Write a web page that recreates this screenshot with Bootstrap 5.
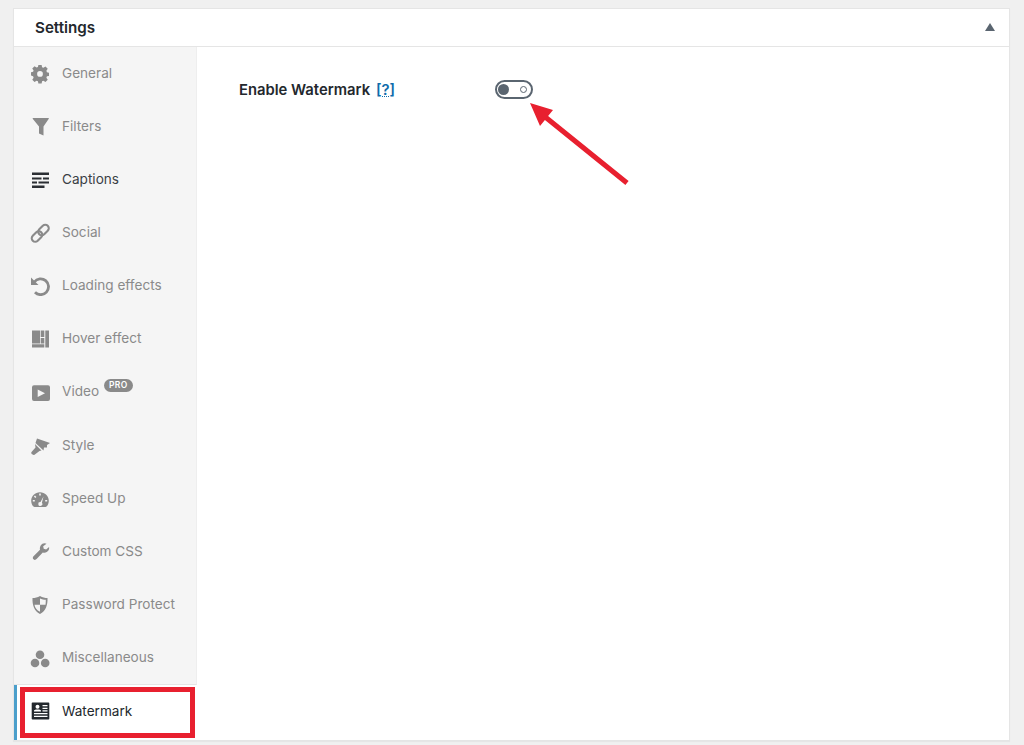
<!doctype html>
<html lang="en">
<head>
<meta charset="utf-8">
<title>Settings</title>
<link href="https://cdn.jsdelivr.net/npm/bootstrap@5.3.0/dist/css/bootstrap.min.css" rel="stylesheet">
<style>
html,body{height:745px;overflow:hidden}
body{background:#f0f0f0;font-family:Inter,"Liberation Sans",sans-serif;color:#23282d;padding:8px 14px 4px 13px}
.panel-box{height:733px;border:1px solid #e5e5e5;border-radius:0;background:#fff;box-shadow:0 1px 1px rgba(0,0,0,.04)}
.panel-head{height:38px;background:#fff;border-bottom:1px solid #e5e5e5;padding:2px 14px 0 21px;font-size:15.2px;font-weight:600;color:#23282d}
.caret-up{width:0;height:0;border-left:5px solid transparent;border-right:5px solid transparent;border-bottom:8px solid #5a6570;margin-top:-3px}
.side-col{width:183px;flex:none}
.side-list{background:#f5f5f5;border-right:1px solid #eee;border-bottom:1px solid #e5e5e5}
.side-link{height:53px;padding-left:16px;gap:12px;color:#8a8a8a;font-size:13.6px;text-decoration:none;position:relative}
.side-link:nth-child(8){margin-top:1px}
.side-link svg{flex:none;fill:#8a8a8a}
.side-link.is-dark{color:#3a3f45}
.side-link.is-dark svg{fill:#2b2e33}
.side-active{height:55px;padding:0 0 3px 16px;gap:12px;background:#fff;border-left:3px solid #4b9fcb;color:#23282d;font-size:13.6px;position:relative;margin-right:1px}
.side-active svg{fill:#23282d;flex:none;margin-left:-3px}
.red-frame{position:absolute;left:3px;top:2px;width:175px;height:51px;border:5px solid #e8202f;pointer-events:none}
.pro-tag{background:#8a8a8a;color:#fff;font-size:8.5px;font-weight:600;letter-spacing:.3px;line-height:13px;height:13px;padding:0 5px;border-radius:7px;align-self:flex-start;margin:14px 0 0 -7px}
.main-col{position:relative;padding:30px 42px}
.field-label{font-size:14.8px;font-weight:600;color:#23282d;width:256px;gap:6px;padding-top:2px}
.help-link{color:#0f6cab;font-weight:600;font-size:14.8px;text-decoration:underline dotted 1px}
.toggle-pill{width:38px;height:19px;border:2.5px solid #5a6570;border-radius:10px;padding:0 4px 0 .5px}
.toggle-knob{width:11px;height:11px;border-radius:50%;background:#5a6570}
.toggle-dot{width:7px;height:7px;border-radius:50%;border:1.5px solid #5a6570}
.red-arrow{position:absolute;left:320px;top:40px;width:120px;height:110px;pointer-events:none}
</style>
</head>
<body>
<div class="card panel-box overflow-hidden">
  <div class="panel-head d-flex align-items-center justify-content-between">
    <span>Settings</span><span class="caret-up"></span>
  </div>
  <div class="d-flex flex-grow-1">
    <div class="side-col d-flex flex-column">
      <nav class="side-list d-flex flex-column">
        <a class="side-link d-flex align-items-center" href="#"><svg width="20" height="20" viewBox="0 0 20 20"><path transform="translate(1 .9) scale(.9)" fill-rule="evenodd" d="M8.200 0h3.600l.5 2.700 1.500.6 2.300-1.500 2.500 2.500-1.500 2.200.6 1.600 2.300.5v3.600l-2.300.5-.6 1.600 1.500 2.200-2.500 2.500-2.300-1.500-1.500.6-.5 2.700H8.200l-.5-2.700-1.500-.6-2.300 1.500-2.500-2.500 1.500-2.200-.6-1.600L0 11.800V8.200l2.300-.5.6-1.600-1.500-2.200 2.500-2.500 2.300 1.500 1.500-.6zM10 6.800a3.200 3.200 0 1 0 0 6.400 3.200 3.200 0 0 0 0-6.400z"/></svg>General</a>
        <a class="side-link d-flex align-items-center" href="#"><svg width="20" height="20" viewBox="0 0 20 20"><path d="M3 1h15.500c.4 0 .5.400.3.700L13.500 9.500V18.500L9 16.500V9.500L2.700 1.700C2.500 1.300 2.700 1 3 1z"/></svg>Filters</a>
        <a class="side-link is-dark d-flex align-items-center" href="#"><svg width="20" height="20" viewBox="0 0 20 20"><path d="M2 2.500h17V5H2zM2 7.500h9.500v2H2zM13 7.500h6v2h-6zM2 11.500h5v2H2zM8.500 11.500H19v2H8.500zM2 15.500h12.500V18H2z"/></svg>Captions</a>
        <a class="side-link d-flex align-items-center" href="#"><svg width="20" height="20" viewBox="0 0 20 20"><g fill="none" stroke="#8a8a8a" stroke-width="2.100"><rect x="10" y="1" width="7" height="12" rx="3.500" transform="rotate(45 13.500 7)"/><rect x="3.500" y="7.500" width="7" height="12" rx="3.500" transform="rotate(45 7 13.500)"/></g></svg>Social</a>
        <a class="side-link d-flex align-items-center" href="#"><svg width="20" height="20" viewBox="0 0 20 20"><path fill="none" stroke="#8a8a8a" stroke-width="2.800" d="M4.300 6A7.900 7.900 0 1 1 5 16.300"/><path d="M1 1.500l7.500 7.500H1z"/></svg>Loading effects</a>
        <a class="side-link d-flex align-items-center" href="#"><svg width="20" height="20" viewBox="0 0 20 20"><path d="M2 1.500h8v13H2zM10.700 1.500h3.600v6.500h-3.600zM15.300 1.500H19v17h-3.700zM10.700 9h3.600v5.500h-3.600zM2 15.200h12.300v3.300H2z"/></svg>Hover effect</a>
        <a class="side-link d-flex align-items-center" href="#"><svg width="20" height="20" viewBox="0 0 20 20"><path fill-rule="evenodd" d="M4 3.200h14a2 2 0 0 1 2 2V17a2 2 0 0 1-2 2H4a2 2 0 0 1-2-2V5.200a2 2 0 0 1 2-2zm3.700 4.300v7.400l7.300-3.700z"/></svg>Video<span class="pro-tag">PRO</span></a>
        <a class="side-link d-flex align-items-center" href="#"><svg width="20" height="20" viewBox="0 0 20 20"><path d="M7 2.500L20 7l-3 2v2.500h-3l-.5 3L5.500 7zM5 8l6.500 6.500-2 .5-5 3.700C3 19.500 .5 17.500 1.500 16L5.500 11.500z"/></svg>Style</a>
        <a class="side-link d-flex align-items-center" href="#"><svg width="20" height="20" viewBox="0 0 20 20"><path transform="translate(0 1)" fill-rule="evenodd" d="M10 2.200c4.900 0 8.800 3.800 8.800 8.500 0 2.100-.7 4.100-2 5.600-.4.400-.9.600-1.400.6H4.600c-.5 0-1-.2-1.400-.6-1.300-1.500-2-3.500-2-5.600C1.200 6 5.100 2.200 10 2.200zM9.200 3.600v2h1.600v-2zM5 5.500L3.900 6.600l1.400 1.400 1.100-1.100zM2.800 10v1.600h2V10zM15.200 10v1.600h2V10zM13.500 6.500l-3 5.500a2 2 0 1 0 1.400.8z"/></svg>Speed Up</a>
        <a class="side-link d-flex align-items-center" href="#"><svg width="20" height="20" viewBox="0 0 20 20"><path d="M14.500 1.200c1 0 1.500.2 2 .5l-3.300 2.600.5 2.500 2.400.8 3-2.600c.3 2.200-.5 4-2.300 5-1.400.8-2.800.8-4 .4l-6.200 6.700c-.9 1-2.300 1-3.100.2-.9-.8-.9-2.200 0-3.100l6.500-6.500C9.400 4.400 11.500 1.200 14.500 1.200z"/></svg>Custom CSS</a>
        <a class="side-link d-flex align-items-center" href="#"><svg width="20" height="20" viewBox="0 0 20 20"><path fill-rule="evenodd" d="M10 1c2.500 1.500 5 2 7.500 2 .3 7-1.600 13-7.500 16C4.100 16 2.200 10 2.500 3 5 3 7.500 2.500 10 1zM10 3.400v6.400H4.500c.5 3 2.200 5.500 5.500 7V9.800h5.500c.2-1.500.3-3 .3-5-2-.1-4-.5-5.800-1.400z"/></svg>Password Protect</a>
        <a class="side-link d-flex align-items-center" href="#"><svg width="20" height="20" viewBox="0 0 20 20"><circle cx="10" cy="6.800" r="4.300"/><circle cx="5" cy="15" r="4.300"/><circle cx="15.200" cy="15" r="4.300"/></svg>Miscellaneous</a>
      </nav>
      <div class="side-active d-flex align-items-center">
        <svg width="20" height="20" viewBox="0 0 20 20"><path fill-rule="evenodd" d="M2.500 1.500h16a.8.800 0 0 1 .8.800v15.500a.8.800 0 0 1-.8.800h-16a.8.800 0 0 1-.8-.8V2.300a.8.800 0 0 1 .8-.8zM7.500 3.800a2 2 0 1 0 0 4 2 2 0 0 0 0-4zM4 10.500h7V9.800c0-.8-1-1.400-3.500-1.400S4 9 4 9.800zM12.500 4v1.300h5V4zM12.500 6.700V8h5V6.700zM12.500 9.300v1.300h5V9.300zM4 12v1.300h13.500V12zM4 14.700V16h13.500v-1.300z"/></svg>
        Watermark
        <span class="red-frame"></span>
      </div>
    </div>
    <div class="main-col flex-grow-1">
      <div class="d-flex align-items-center">
        <div class="field-label d-flex align-items-center"><span>Enable Watermark</span><a class="help-link" href="#">[?]</a></div>
        <div class="toggle-pill d-flex align-items-center justify-content-between"><span class="toggle-knob"></span><span class="toggle-dot"></span></div>
      </div>
      <svg class="red-arrow" viewBox="0 0 120 110"><path fill="#e8202f" d="M13 16L36 23 31.100 29.100 111.600 94.100 108.400 97.900 27.900 32.900 23 39z"/></svg>
    </div>
  </div>
</div>
<script src="https://cdn.jsdelivr.net/npm/bootstrap@5.3.0/dist/js/bootstrap.bundle.min.js"></script>
</body>
</html>
